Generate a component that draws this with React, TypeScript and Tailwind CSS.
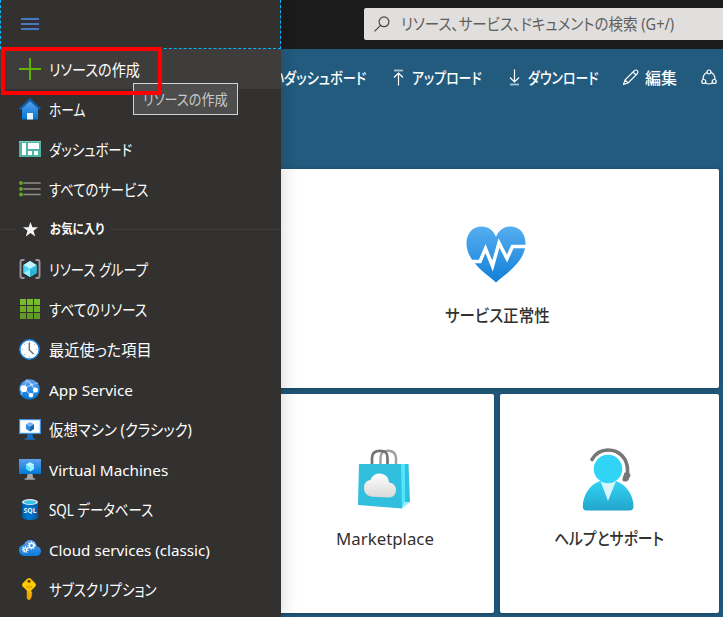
import { useLayoutEffect, useRef } from "react";
import type { ReactNode } from "react";

function Fit({ w, className = "", children }: { w: number; className?: string; children: string }) {
  const ref = useRef<HTMLSpanElement>(null);
  useLayoutEffect(() => {
    const el = ref.current;
    if (el) el.style.transform = `scaleX(${w / el.offsetWidth})`;
  }, [w, children]);
  return (
    <span className={`block shrink-0 whitespace-nowrap ${className}`} style={{ width: w }}>
      <span ref={ref} className="inline-block origin-left [font-feature-settings:'palt']">
        {children}
      </span>
    </span>
  );
}

function Plus() {
  return (
    <svg width="22" height="22" viewBox="0 0 22 22">
      <path d="M10 0h2v10h10v2H12v10h-2V12H0v-2h10z" fill="#5db300" />
    </svg>
  );
}

function Home() {
  return (
    <svg width="22" height="22" viewBox="0 0 22 22">
      <defs>
        <linearGradient id="hm" x1="0" y1="0" x2="0" y2="1">
          <stop offset="0" stopColor="#5ea0ef" />
          <stop offset="1" stopColor="#0078d4" />
        </linearGradient>
      </defs>
      <path d="M3 10L11 2.5L19 10V21.5H3z" fill="url(#hm)" />
      <path d="M11 0L22 10.4L20.6 12L11 3.2L1.4 12L0 10.4z" fill="#0f5fab" />
      <path d="M8 15h6v6.5H8z" fill="#eaf1f8" />
    </svg>
  );
}

function Dash() {
  return (
    <svg width="22" height="16" viewBox="0 0 22 16">
      <path d="M0 0h22v16H0z" fill="#4fb3a5" />
      <path d="M0 0h22v1H0z" fill="#80d4c7" />
      <path d="M3 2h4v12H3zM9 2h11v6H9zM9 10h4v4H9zM15 10h4v4h-4z" fill="#fff" />
    </svg>
  );
}

function ListIcon() {
  return (
    <svg width="22" height="16" viewBox="0 0 22 16">
      <path d="M5 2h16M5 8h16M5 13.5h16" stroke="#8d8d8c" strokeWidth="1.7" strokeLinecap="round" />
      <g fill="#66a820">
        <circle cx="2" cy="2" r="1.9" />
        <circle cx="2" cy="8" r="1.9" />
        <circle cx="2" cy="13.5" r="1.9" />
      </g>
    </svg>
  );
}

function Star() {
  return (
    <svg width="15" height="15" viewBox="0 0 15 15">
      <path d="M7.5 0l1.9 5.3H15l-4.5 3.5 1.7 5.6-4.7-3.4-4.7 3.4 1.7-5.6L0 5.3h5.6z" fill="#f5f5f5" />
    </svg>
  );
}

function Group() {
  return (
    <svg width="22" height="20" viewBox="0 0 22 20">
      <path d="M5.500 1H3.500Q1.500 1 1.500 3v14q0 2 2 2h2M16.500 1h2q2 0 2 2v14q0 2-2 2h-2" fill="none" stroke="#999" strokeWidth="1.900" />
      <path d="M11 2l6.500 4v8L11 18 4.500 14V6z" fill="#50e6ff" />
      <path d="M11 2l6.500 4L11 10 4.500 6z" fill="#c3f1ff" />
      <path d="M17.500 6v8L11 18v-8z" fill="#32bedd" />
      <path d="M4.500 14L11 10v8z" fill="#9cebff" />
      <path d="M17.500 14L11 10v8z" fill="#27b4d8" />
      <path d="M4.500 6L11 10 4.500 14z" fill="#45d4f2" />
    </svg>
  );
}

function GridIcon() {
  return (
    <svg width="20" height="20" viewBox="0 0 20 20">
      <path d="M0 0h6v6H0zM7 0h6v6H7zM14 0h6v6h-6z" fill="#76bc2d" />
      <path d="M0 7h6v6H0zM7 7h6v6H7zM14 7h6v6h-6z" fill="#6cae26" />
      <path d="M0 14h6v6H0zM7 14h6v6H7zM14 14h6v6h-6z" fill="#5f9a22" />
    </svg>
  );
}

function Clock() {
  return (
    <svg width="22" height="21" viewBox="0 0 22 21">
      <circle cx="10.500" cy="10.500" r="9.700" fill="#fff" stroke="#1b84dd" strokeWidth="1.400" />
      <path d="M10.500 2.500v1.300M10.500 17.200v1.300M2.500 10.500h1.300M17.200 10.500h1.300M5 5l.7.700M16 5l-.7.700M5 16l.7-.700M16 16l-.7-.700" stroke="#aaa" strokeWidth="1" />
      <path d="M10.300 3.800V11L14.500 15" fill="none" stroke="#707070" strokeWidth="1.500" />
    </svg>
  );
}

function AppService() {
  return (
    <svg width="22" height="21" viewBox="0 0 22 21">
      <defs>
        <linearGradient id="as" x1="0" y1="0" x2="0" y2="1">
          <stop offset="0" stopColor="#5ea0ef" />
          <stop offset="1" stopColor="#0078d4" />
        </linearGradient>
      </defs>
      <circle cx="10.500" cy="10.500" r="10.300" fill="url(#as)" />
      <path d="M8 1L5 9.500 12.500 16.500 16.500 11zM5 9.500L13 5.500 8 1M13 5.500l3.500 5.500M13 5.500L19 4M5 9.500L2 16" fill="none" stroke="#8fc3f7" strokeWidth="1.200" />
      <circle cx="4.700" cy="9.700" r="3.400" fill="#fff" />
      <circle cx="16.500" cy="11" r="2.500" fill="#fff" />
      <circle cx="12" cy="16.300" r="2.300" fill="#fff" />
      <circle cx="12.500" cy="5.700" r="1.200" fill="#c7e2fb" />
    </svg>
  );
}

function Monitor({ classic = false }: { classic?: boolean }) {
  return (
    <svg width="22" height="21" viewBox="0 0 22 21">
      <defs>
        <linearGradient id="mo" x1="0" y1="0" x2="0" y2="1">
          <stop offset="0" stopColor="#5ea0ef" />
          <stop offset="1" stopColor="#0078d4" />
        </linearGradient>
      </defs>
      <path d="M0 0h22v15H0z" fill={classic ? "#3d91e2" : "url(#mo)"} />
      {classic && <path d="M1.200 1.200h19.600v12.600H1.200z" fill="#fff" />}
      <path d="M8.500 15h5l.7 4 2 .8v1H5.500v-1l2.300-.8z" fill={classic ? "#1470bd" : "#a5a5a5"} />
      <path d="M11 3.200l4 2.300v4.600l-4 2.400-4-2.400V5.500z" fill={classic ? "#3088dc" : "#50e6ff"} />
      <path d="M11 3.200l4 2.300-4 2.400-4-2.400z" fill={classic ? "#7fb5f1" : "#c3f1ff"} />
      <path d="M15 5.500v4.600l-4 2.400V7.900z" fill={classic ? "#1767b2" : "#9cebff"} />
    </svg>
  );
}

function Sql() {
  return (
    <svg width="16" height="21" viewBox="0 0 16 21">
      <defs>
        <linearGradient id="sq" x1="0" y1="0" x2="1" y2="0">
          <stop offset="0" stopColor="#005ba1" />
          <stop offset=".4" stopColor="#0078d4" />
          <stop offset="1" stopColor="#005ba1" />
        </linearGradient>
      </defs>
      <path d="M0 3v15c0 1.700 3.600 3 8 3s8-1.300 8-3V3z" fill="url(#sq)" />
      <ellipse cx="8" cy="3" rx="8" ry="3" fill="#e8e8e8" />
      <ellipse cx="8" cy="3.200" rx="6.200" ry="2" fill="#37c4e6" />
      <text x="8" y="14.300" textAnchor="middle" textLength="13" lengthAdjust="spacingAndGlyphs" fontSize="7" fontWeight="700" fontFamily="Noto Sans, sans-serif" fill="#e8f4ff">SQL</text>
    </svg>
  );
}

function Gear({ x, y, r }: { x: number; y: number; r: number }) {
  return (
    <g>
      <circle cx={x} cy={y} r={r} fill="none" stroke="#fff" strokeWidth="1.500" strokeDasharray="1.300 1" />
      <circle cx={x} cy={y} r={r - 1.1} fill="none" stroke="#fff" strokeWidth="1.200" />
    </g>
  );
}

function CloudIcon() {
  return (
    <svg width="22" height="18" viewBox="0 0 22 18">
      <defs>
        <linearGradient id="cl" x1="0" y1="0" x2="0" y2="1">
          <stop offset="0" stopColor="#5ea0ef" />
          <stop offset="1" stopColor="#0b7cd8" />
        </linearGradient>
      </defs>
      <path d="M22 11c0-2.700-2-4.500-4.300-4.800C17.500 2.500 14.700 0 11.200 0 8.300 0 5.900 1.800 5 4.600 2.200 5 0 7.300 0 10.200 0 13.500 2.600 16 6 16h11.200C20 16 22 13.700 22 11z" fill="url(#cl)" />
      <Gear x={6.300} y={9.500} r={2.600} />
      <Gear x={12.500} y={5.500} r={3.200} />
    </svg>
  );
}

function Key() {
  return (
    <svg width="16" height="22" viewBox="0 0 16 22">
      <defs>
        <linearGradient id="ke" x1="0" y1="0" x2="0" y2="1">
          <stop offset="0" stopColor="#f9b900" />
          <stop offset=".35" stopColor="#ffd400" />
          <stop offset="1" stopColor="#f59d00" />
        </linearGradient>
      </defs>
      <path d="M5.200.7Q7-.600 8.800.7L13.300 5.200Q14.500 7 13.300 8.600L9.300 12.400V13.700L10.500 15 9.300 16.200 10.500 17.500 9.300 18.600V20L7.400 22H6.400L4.800 20.500V12.400L.7 8.600Q-.500 7 .7 5.200z" fill="url(#ke)" />
      <circle cx="7" cy="3.200" r="1.500" fill="#59400f" />
      <path d="M3.500 8h7M4 9.500h6" stroke="#e49400" strokeWidth=".8" />
      <path d="M6 13v6.500" stroke="#e49400" strokeWidth=".8" />
    </svg>
  );
}

type RowProps = { icon: ReactNode; w: number; label: string; hot?: boolean; latin?: boolean };

function Row({ icon, w, label, hot = false, latin = false }: RowProps) {
  return (
    <li className={`flex h-10 items-center gap-2 pl-[19px] ${hot ? "bg-[#3e3d3c]" : ""}`}>
      <span className="flex w-[22px] justify-center">{icon}</span>
      <Fit w={w} className={latin ? "pt-0.5" : "pt-0.5 text-[15.5px]"}>{label}</Fit>
    </li>
  );
}

function Heart() {
  return (
    <svg width="60" height="57" viewBox="0 0 60 57">
      <defs>
        <linearGradient id="he" x1="0" y1="0" x2="0" y2="1">
          <stop offset="0" stopColor="#55aef0" />
          <stop offset="1" stopColor="#137fd9" />
        </linearGradient>
      </defs>
      <path d="M30 56.500C22 49 .5 36 .5 17.500.5 7 7 .5 15.500.5 22.500.5 27.500 4.500 30 11 32.500 4.500 37.500.5 44.500.5 53 .5 59.500 7 59.500 17.500 59.500 36 38 49 30 56.500z" fill="url(#he)" />
      <path d="M5 35.500h9L19.500 22.500 26.500 40 33 17 41 32.500 46.500 20.500H60" fill="none" stroke="#fff" strokeWidth="3.500" />
    </svg>
  );
}

function Bag() {
  return (
    <svg width="52" height="60" viewBox="0 0 52 60">
      <defs>
        <linearGradient id="bc" x1="0" y1="0" x2="0" y2="1">
          <stop offset="0" stopColor="#fff" />
          <stop offset="1" stopColor="#d9d9d9" />
        </linearGradient>
      </defs>
      <path d="M22.500 17V9q0-7.200 7.500-7.200T38 9v8" fill="none" stroke="#a0a0a0" strokeWidth="2.500" />
      <path d="M14 17V9q0-7.200 8-7.200T29.500 9v8" fill="none" stroke="#737373" strokeWidth="2.700" />
      <path d="M1 15h43v44.500L0 56z" fill="#32bedd" />
      <path d="M43 15h4v38l-3 6.500z" fill="#50e6ff" />
      <path d="M47 15h3.500L52 53l-5 1z" fill="#32bedd" />
      <path d="M44 59.500l3-6.500h5z" fill="#9cebff" />
      <path d="M38 41c0-4-2.500-7-7-7.500C30.500 28 27 24.500 21.500 24.500c-4.500 0-7.500 2.500-9 6.500C8.500 31.500 6 34.500 6 39c0 5 3.500 8.500 9 8.800L31 48.500c4 0 7-3 7-7.500z" fill="url(#bc)" />
    </svg>
  );
}

function Support() {
  return (
    <svg width="52" height="63" viewBox="0 0 52 63">
      <defs>
        <linearGradient id="su" x1="0" y1="0" x2="0" y2="1">
          <stop offset="0" stopColor="#32d4f5" />
          <stop offset="1" stopColor="#22a5cb" />
        </linearGradient>
      </defs>
      <path d="M4.500 62.500Q.8 62.500.8 58.500C.8 47 8 36.500 18 33h16C44 36.500 51.500 47 51.500 58.500Q51.500 62.500 47.500 62.500z" fill="url(#su)" />
      <path d="M18.500 33h15.500L26 53z" fill="#d6f5fc" />
      <circle cx="26" cy="21" r="14.300" fill="#32d4f5" />
      <path d="M10 11.500C13.500 5.500 19 2 26 2c11.500 0 19.500 8.500 19.500 20v4" fill="none" stroke="#767676" strokeWidth="3.600" strokeLinecap="round" />
      <path d="M42.500 24.500l5.500 1q1 2-.5 4l-1 2.500q-1.500 2-4 1.500-2.500-.5-2-3z" fill="#767676" />
    </svg>
  );
}

function Tile({ icon, label, w, className = "", textClass }: { icon: ReactNode; label: string; w: number; className?: string; textClass: string }) {
  return (
    <div className={`flex h-[219px] flex-col items-center rounded-[2px] bg-white shadow-[0_1px_4px_rgba(0,0,0,0.3)] ${className}`}>
      <div className="flex h-[120px] items-end justify-center">{icon}</div>
      <Fit w={w} className={`leading-[26px] text-[#323130] ${textClass}`}>{label}</Fit>
    </div>
  );
}

export default function App() {
  return (
    <div className="relative flex h-[617px] w-[723px] overflow-hidden bg-[#225b7e] font-['Noto_Sans','Noto_Sans_CJK_JP',sans-serif] text-[15px] leading-5 text-white">
      <nav className="relative z-10 w-[281px] shrink-0 bg-[#323130] shadow-[1px_0_16px_rgba(0,0,0,0.16)]">
        <div className="flex h-[49px] items-center border-r border-b border-l border-dashed border-[#00b7ff] pl-5">
          <svg width="18" height="14" viewBox="0 0 18 14">
            <path d="M0 2h18M0 7h18M0 12h18" stroke="#4678c8" strokeWidth="1.800" />
          </svg>
        </div>
        <ul>
          <Row hot icon={<Plus />} w={91} label="リソースの作成" />
          <Row icon={<Home />} w={36} label="ホーム" />
          <Row icon={<Dash />} w={83} label="ダッシュボード" />
          <Row icon={<ListIcon />} w={99} label="すべてのサービス" />
          <li className="flex h-10 items-center">
            <span className="h-px w-4 bg-[#3e3d3c]" />
            <span className="ml-[7px]"><Star /></span>
            <Fit w={54} className="-mt-0.5 ml-[12px] text-[13px] font-bold">お気に入り</Fit>
            <span className="ml-[6px] h-px flex-1 bg-[#3e3d3c]" />
          </li>
          <Row icon={<Group />} w={99} label="リソース グループ" />
          <Row icon={<GridIcon />} w={98} label="すべてのリソース" />
          <Row icon={<Clock />} w={103} label="最近使った項目" />
          <Row latin icon={<AppService />} w={84} label="App Service" />
          <Row icon={<Monitor classic />} w={143} label="仮想マシン (クラシック)" />
          <Row latin icon={<Monitor />} w={119} label="Virtual Machines" />
          <Row icon={<Sql />} w={104} label="SQL データベース" />
          <Row latin icon={<CloudIcon />} w={161} label="Cloud services (classic)" />
          <Row icon={<Key />} w={108} label="サブスクリプション" />
        </ul>
        <div className="absolute top-[83px] left-[133px] flex h-8 w-[105px] items-center border border-[#d2d2d4] bg-[#4d4d4d] pl-[9px] text-[#c9c9c9]">
          <Fit w={85} className="-mt-px">リソースの作成</Fit>
        </div>
        <div className="absolute top-[47px] left-px h-12 w-[161px] border-4 border-[#ff0000]" />
      </nav>

      <main className="min-w-0 flex-1">
        <header className="flex h-[49px] items-start bg-[#1b1b1b] pt-2 pl-[83px]">
          <div className="flex h-8 w-[370px] shrink-0 items-center rounded-[2px] bg-[#e1dfdd] pl-2.5 text-[#605e5c]">
            <svg width="16" height="16" viewBox="0 0 16 16" fill="none" stroke="#484644" strokeWidth="1.200">
              <circle cx="10" cy="5.800" r="4.900" />
              <path d="M6.500 9.300L.5 15.300" />
            </svg>
            <Fit w={273} className="ml-[11px] text-[16px]">リソース、サービス、ドキュメントの検索 (G+/)</Fit>
          </div>
        </header>

        <div className="flex h-[120px] items-start pt-4">
          <div className="flex h-6 shrink-0 items-center text-[15.5px] font-medium">
            <Fit w={39} className="-ml-9 pt-0.5">新しい</Fit>
            <Fit w={82} className="pt-0.5">ダッシュボード</Fit>
            <svg className="ml-[26px]" width="13" height="17" viewBox="0 0 13 17" fill="none" stroke="#fff" strokeWidth="1.200">
              <path d="M2 1.500h9" stroke="#a9c3d3" strokeWidth="1.800" />
              <path d="M6.500 16.500V4M2 8.500L6.500 4 11 8.500" />
            </svg>
            <Fit w={70} className="ml-[7px] pt-0.5">アップロード</Fit>
            <svg className="ml-[26px]" width="13" height="17" viewBox="0 0 13 17" fill="none" stroke="#fff" strokeWidth="1.200">
              <path d="M2 15.500h9" stroke="#a9c3d3" strokeWidth="1.800" />
              <path d="M6.500.5V13M2 8.500L6.500 13 11 8.500" />
            </svg>
            <Fit w={71} className="ml-[7px] pt-0.5">ダウンロード</Fit>
            <svg className="ml-[23px]" width="17" height="17" viewBox="0 0 17 17" fill="none" stroke="#fff" strokeWidth="1.100" strokeLinejoin="round">
              <path d="M1.500 15.500L3 11 12 2q2-1.700 3.300-.4T15 5l-9 9zM3 11l3 3M11 3l3 3" />
            </svg>
            <Fit w={32} className="ml-[6px] pt-0.5">編集</Fit>
            <svg className="ml-[24px]" width="16" height="17" viewBox="0 0 16 17" fill="none" stroke="#fff" strokeWidth="1.200">
              <circle cx="8" cy="3" r="2" />
              <circle cx="2.800" cy="12.500" r="2" />
              <circle cx="13.200" cy="12.500" r="2" />
              <path d="M6 3.500Q2 5 2 10.500M10 3.500q4 1.500 4 7M4.800 14q3.200 2 6.400 0" />
            </svg>
          </div>
        </div>

        <div className="-ml-1.5 grid w-[444px] grid-cols-[219px_219px] gap-1.5">
          <Tile className="col-span-2" icon={<div className="mr-[2px] mb-[6px]"><Heart /></div>} w={105} label="サービス正常性" textClass="mt-[14px] text-[17px] font-medium" />
          <Tile icon={<div className="mr-[2px] mb-[5px]"><Bag /></div>} w={98} label="Marketplace" textClass="mt-3 text-[17px]" />
          <Tile icon={<div className="mr-[3px] mb-[3px]"><Support /></div>} w={110} label="ヘルプとサポート" textClass="mt-3 -ml-px text-[17px] font-medium" />
        </div>
      </main>
    </div>
  );
}
